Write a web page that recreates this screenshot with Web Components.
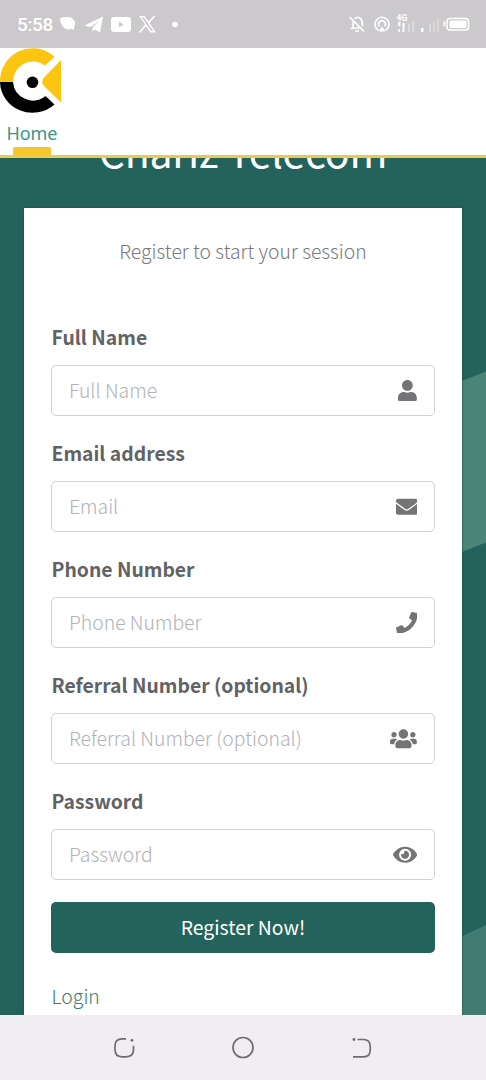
<!DOCTYPE html>
<html lang="en">
<head>
<meta charset="utf-8">
<title>Register</title>
<style>
html, body { margin: 0; height: 100%; overflow: hidden; }
body { font-family: "Noto Sans CJK SC", "Noto Sans", sans-serif; background: #24635b; }
</style>
</head>
<body>
<phone-screen>
  <status-bar slot="status"></status-bar>
  <site-header slot="header">Home</site-header>
  <register-page>
    <span slot="title">Chariz Telecom</span>
    <span slot="intro">Register to start your session</span>
    <form-field label="Full Name" hint="Full Name" icon="user"></form-field>
    <form-field label="Email address" hint="Email" icon="mail"></form-field>
    <form-field label="Phone Number" hint="Phone Number" icon="phone"></form-field>
    <form-field label="Referral Number (optional)" hint="Referral Number (optional)" icon="users"></form-field>
    <form-field label="Password" hint="Password" icon="eye"></form-field>
    <submit-button>Register Now!</submit-button>
    <text-link>Login</text-link>
  </register-page>
  <nav-bar slot="nav"></nav-bar>
</phone-screen>
<script>
const define = (name, html, setup) => customElements.define(name, class extends HTMLElement {
  constructor() {
    super();
    this.attachShadow({ mode: 'open' }).innerHTML = html;
  }
  connectedCallback() { if (setup) setup(this, this.shadowRoot); }
});

define('phone-screen', `
<style>
:host { display: grid; grid-template-rows: 48px 110px 857px 65px; height: 1080px; width: 486px; overflow: hidden; }
</style>
<slot name="status"></slot><slot name="header"></slot><slot></slot><slot name="nav"></slot>`);

define('status-bar', `
<style>
:host { display: flex; align-items: center; background: #cbc9cc; color: #fff; padding: 0 16px 0 17px; box-sizing: border-box; font: 500 19px/48px Roboto, sans-serif; }
span { width: 37px; letter-spacing: -.35px; padding-top: 2px; }
svg { display: block; fill: #fff; }
.left { margin-left: 5px; } .right { margin-left: auto; }
</style>
<span>5:58</span>
<svg class="left" width="122" height="48" viewBox="59 0 122 48">
  <path d="M60.500 18q3-1.500 7-1 5 0 6 3l1.500 1.500q.8 3-1 5.500l-.3 3-2.200-1.200q-2.500 1.200-5 .2-3-.5-4-3.500-3-3.500-2-7.500z"/>
  <path d="M84.500 25.500 103 16.500 100 32.500 94.500 29.500 92.500 32v-4.500l7-7-9 6.500z"/>
  <path fill-rule="evenodd" d="M114 17h14q3 0 3 3v9q0 3-3 3h-14q-3 0-3-3v-9q0-3 3-3zm5 4.800v5.400l4.700-2.700z"/>
  <path fill-rule="evenodd" d="M139 16h5.500l4 5.500 5-5.500h2l-6 7 6.500 9.500h-5.500l-4.500-6.500-5.500 6.500h-2l6.700-8zm2.800 1.500 9.300 13.500h2.200l-9.300-13.500z"/>
  <circle cx="175" cy="24.500" r="2.800"/>
</svg>
<svg class="right" width="122" height="48" viewBox="348 0 122 48">
  <g fill="none" stroke="#fff" stroke-width="1.700">
    <path d="M349.500 17 364 31.500M353.500 20q-.5 3-.5 8h8M354.500 19q3-3.500 6.500 0 1.500 2 1.500 7M350.500 28.500h3M355 31h4"/>
    <path d="M378.500 30.300A7 7 0 1 1 385.500 30.300"/><path d="M379.300 26.200A3.400 3.400 0 1 1 384.700 26.200"/>
  </g>
  <path d="M382 26.500 385.500 31.500h-7z"/>
  <text x="396.500" y="21" font-family="Roboto, sans-serif" font-size="8.500" font-weight="700">4G</text>
  <path d="M398 22h2.500v4h-2.500zm4.500 1h2v4h-2zM398.500 29h1.500v3h-1.500zm4-2h1.800v5h-1.800z"/>
  <path fill-opacity=".3" d="M408 24h2v8h-2zm4-3h2.500v11H412zM429 24h2v8h-2zm4-2.500h2V32h-2zm4-2.500h2v13h-2z"/>
  <path d="M421 28h2.500v4H421z"/>
  <rect x="447" y="18.500" width="21.500" height="11.500" rx="3" fill="none" stroke="#fff" stroke-width="1.500"/>
  <rect x="449.500" y="20.500" width="17" height="7.500" rx="1"/><path d="M443.500 21.500h1.800v5h-1.800z"/>
</svg>`);

define('site-header', `
<style>
:host { display: flex; flex-direction: column; align-items: flex-start; background: #fff; border-bottom: 3px solid #eacb4b; box-sizing: border-box; z-index: 2; height: 110px; }
svg { display: block; flex: none; }
.tab { display: flex; flex-direction: column; align-items: center; width: 64px; flex: 1; color: #3b9484; font: 400 18px/24px "Noto Sans", sans-serif; margin-top: 7px; justify-content: space-between; letter-spacing: -.1px; }
.mark { width: 38px; height: 8px; background: #f7c62f; border-radius: 2px 2px 0 0; }
</style>
<svg width="64" height="66" viewBox="0 48 64 66">
  <path fill="#fcc50f" d="M0 82A32.500 33.500 0 0 1 54.500 57L45 65.500A20 20 0 0 0 13 82z"/>
  <path fill="#000" d="M0 82A32.500 31.500 0 0 0 54.500 104.500L45.500 96A20 20 0 0 1 13 82z"/>
  <path fill="#fcc50f" d="M61 60v42.500L44 86Q40.500 82 44 77.500z"/>
  <circle cx="32.500" cy="82.300" r="5.800"/>
</svg>
<div class="tab"><slot></slot><div class="mark"></div></div>`);

define('register-page', `
<style>
:host { display: grid; grid-template: 857px / 486px; overflow: hidden; background: #24635b; }
.scene, .content { grid-area: 1 / 1; }
.scene { display: block; }
.content { display: flex; flex-direction: column; align-items: center; }
h1 { margin: -36px 0 30px; height: 56px; flex: none; font-size: 41px; font-weight: 400; line-height: 56px; color: #fff; white-space: nowrap; letter-spacing: -.2px; }
.card { flex: 1; min-height: 0; width: 438px; box-sizing: border-box; background: #fff; padding: 28px 27px 0; display: flex; flex-direction: column; overflow: hidden; box-shadow: 0 0 2px #174840; }
p { margin: 0 0 58.500px; font-size: 19.350px; font-weight: 300; line-height: 30px; text-align: center; color: #77797c; flex: none; }
</style>
<svg class="scene" width="486" height="857" viewBox="0 158 486 857">
  <path fill="#4b8578" d="M440 389.500 486 371.500v171l-46 18z"/>
  <path fill="#417b73" d="M440 946.500 486 925v90h-46z"/>
</svg>
<div class="content">
  <h1><slot name="title"></slot></h1>
  <div class="card"><p><slot name="intro"></slot></p><slot></slot></div>
</div>`);

const icons = {
  user: [448, 'M224 256c70.7 0 128-57.3 128-128S294.7 0 224 0 96 57.3 96 128s57.3 128 128 128zm89.6 32h-16.7c-22.2 10.2-46.9 16-72.9 16s-50.6-5.8-72.9-16h-16.7C60.2 288 0 348.2 0 422.4V464c0 26.5 21.500 48 48 48h352c26.500 0 48-21.500 48-48v-41.600c0-74.200-60.200-134.400-134.400-134.400z'],
  mail: [512, 'M502.3 190.8c3.9-3.1 9.7-.2 9.7 4.7V400c0 26.5-21.5 48-48 48H48c-26.5 0-48-21.5-48-48V195.6c0-5 5.7-7.8 9.7-4.7 22.4 17.4 52.1 39.5 154.1 113.6 21.1 15.4 56.7 47.8 92.2 47.6 35.7.3 72-32.8 92.3-47.6 102-74.1 131.6-96.3 154-113.700zM256 320c23.2.4 56.6-29.2 73.4-41.4 132.7-96.3 142.8-104.7 173.4-128.7 5.8-4.5 9.2-11.5 9.2-18.9v-19c0-26.5-21.5-48-48-48H48c-26.5 0-48 21.5-48 48v19c0 7.4 3.4 14.3 9.2 18.9 30.6 23.900 40.7 32.4 173.4 128.7 16.8 12.2 50.2 41.8 73.4 41.400z'],
  phone: [512, 'M493.4 24.6l-104-24c-11.3-2.6-22.9 3.3-27.5 13.900l-48 112c-4.2 9.800-1.400 21.300 6.900 28l60.600 49.600c-36 76.700-98.900 140.500-177.200 177.200l-49.600-60.600c-6.800-8.300-18.200-11.100-28-6.900l-112 48C3.900 366.500-2 378.100.6 389.400l24 104C27.1 504.200 36.700 512 48 512c256.100 0 464-207.500 464-464 0-11.200-7.700-20.900-18.600-23.400z'],
  users: [640, 'M96 224c35.3 0 64-28.7 64-64s-28.7-64-64-64-64 28.7-64 64 28.7 64 64 64zm448 0c35.3 0 64-28.7 64-64s-28.7-64-64-64-64 28.7-64 64 28.7 64 64 64zm32 32h-64c-17.6 0-33.5 7.1-45.1 18.6 40.3 22.1 68.900 62 75.1 109.4h66c17.7 0 32-14.3 32-32v-32c0-35.3-28.7-64-64-64zm-256 0c61.900 0 112-50.1 112-112S381.900 32 320 32 208 82.100 208 144s50.100 112 112 112zm76.800 32h-8.300c-20.800 10-43.900 16-68.500 16s-47.600-6-68.500-16h-8.300C179.600 288 128 339.600 128 403.200V432c0 26.500 21.500 48 48 48h288c26.500 0 48-21.500 48-48v-28.800c0-63.600-51.600-115.200-115.200-115.200zm-223.700-13.400C161.500 263.100 145.600 256 128 256H64c-35.300 0-64 28.700-64 64v32c0 17.700 14.300 32 32 32h65.900c6.300-47.400 34.900-87.300 75.200-109.400z'],
  eye: [576, 'M572.52 241.4C518.29 135.59 410.93 64 288 64S57.68 135.64 3.48 241.41a32.35 32.35 0 0 0 0 29.19C57.71 376.41 165.07 448 288 448s230.32-71.64 284.52-177.41a32.35 32.35 0 0 0 0-29.190zM288 400a144 144 0 1 1 144-144 143.930 143.930 0 0 1-144 144zm0-240a95.310 95.310 0 0 0-25.310 3.790 47.850 47.850 0 0 1-66.900 66.900A95.780 95.780 0 1 0 288 160z']
};

define('form-field', `
<style>
:host { display: flex; flex-direction: column; height: 116px; flex: none; }
label { font-size: 19.350px; font-weight: 700; line-height: 25px; height: 40px; padding-left: .5px; box-sizing: border-box; color: #616264; white-space: nowrap; }
.box { height: 51px; width: 384px; box-sizing: border-box; border: 1.500px solid #cfd1d5; border-radius: 5px; display: flex; align-items: center; justify-content: space-between; padding: 0 17px; }
.hint { font-size: 19.350px; font-weight: 300; line-height: 30px; color: #b0b2b7; white-space: nowrap; }
svg { display: block; fill: #747476; height: 21.500px; margin-top: 1px; }
</style>
<label></label><div class="box"><span class="hint"></span><svg></svg></div>`, (el, root) => {
  const [width, path] = icons[el.getAttribute('icon')];
  root.querySelector('label').textContent = el.getAttribute('label');
  root.querySelector('.hint').textContent = el.getAttribute('hint');
  const svg = root.querySelector('svg');
  svg.setAttribute('viewBox', `0 0 ${width} 512`);
  svg.setAttribute('width', width / 512 * 21.5);
  svg.innerHTML = `<path d="${path}"/>`;
});

define('submit-button', `
<style>
:host { display: flex; flex: none; justify-content: center; width: 384px; height: 51px; margin-top: -2.500px; border-radius: 5px; background: #24635b; color: #fff; font-size: 19.350px; font-weight: 400; line-height: 50px; }
</style><slot></slot>`);

define('text-link', `
<style>
:host { display: block; flex: none; margin-top: 28px; padding-left: .5px; color: #3a7d69; font-size: 19.350px; font-weight: 300; line-height: 30px; }
</style><slot></slot>`);

define('nav-bar', `
<style>
:host { display: flex; justify-content: space-between; align-items: center; background: #f0eef1; padding: 0 112px; box-sizing: border-box; }
svg { display: block; fill: none; stroke: #706b70; stroke-width: 1.700; }
</style>
<svg width="24" height="24" viewBox="112 1036 24 24"><path d="M126 1038.800h-4q-7 0-7 7v4q0 7 7 7h4q7.500 0 7.500-7v-4"/><circle cx="132" cy="1040.300" r="1.400" fill="#706b70" stroke="none"/></svg>
<svg width="24" height="24" viewBox="231 1036 24 24"><circle cx="243" cy="1047.500" r="10"/></svg>
<svg width="24" height="24" viewBox="350 1036 24 24"><path d="M357.500 1039.500h6q6.700 0 6.700 7v3.500q0 6.800-6.700 6.800H353"/><circle cx="354" cy="1039.500" r="1.400" fill="#706b70" stroke="none"/></svg>`);
</script>
</body>
</html>
